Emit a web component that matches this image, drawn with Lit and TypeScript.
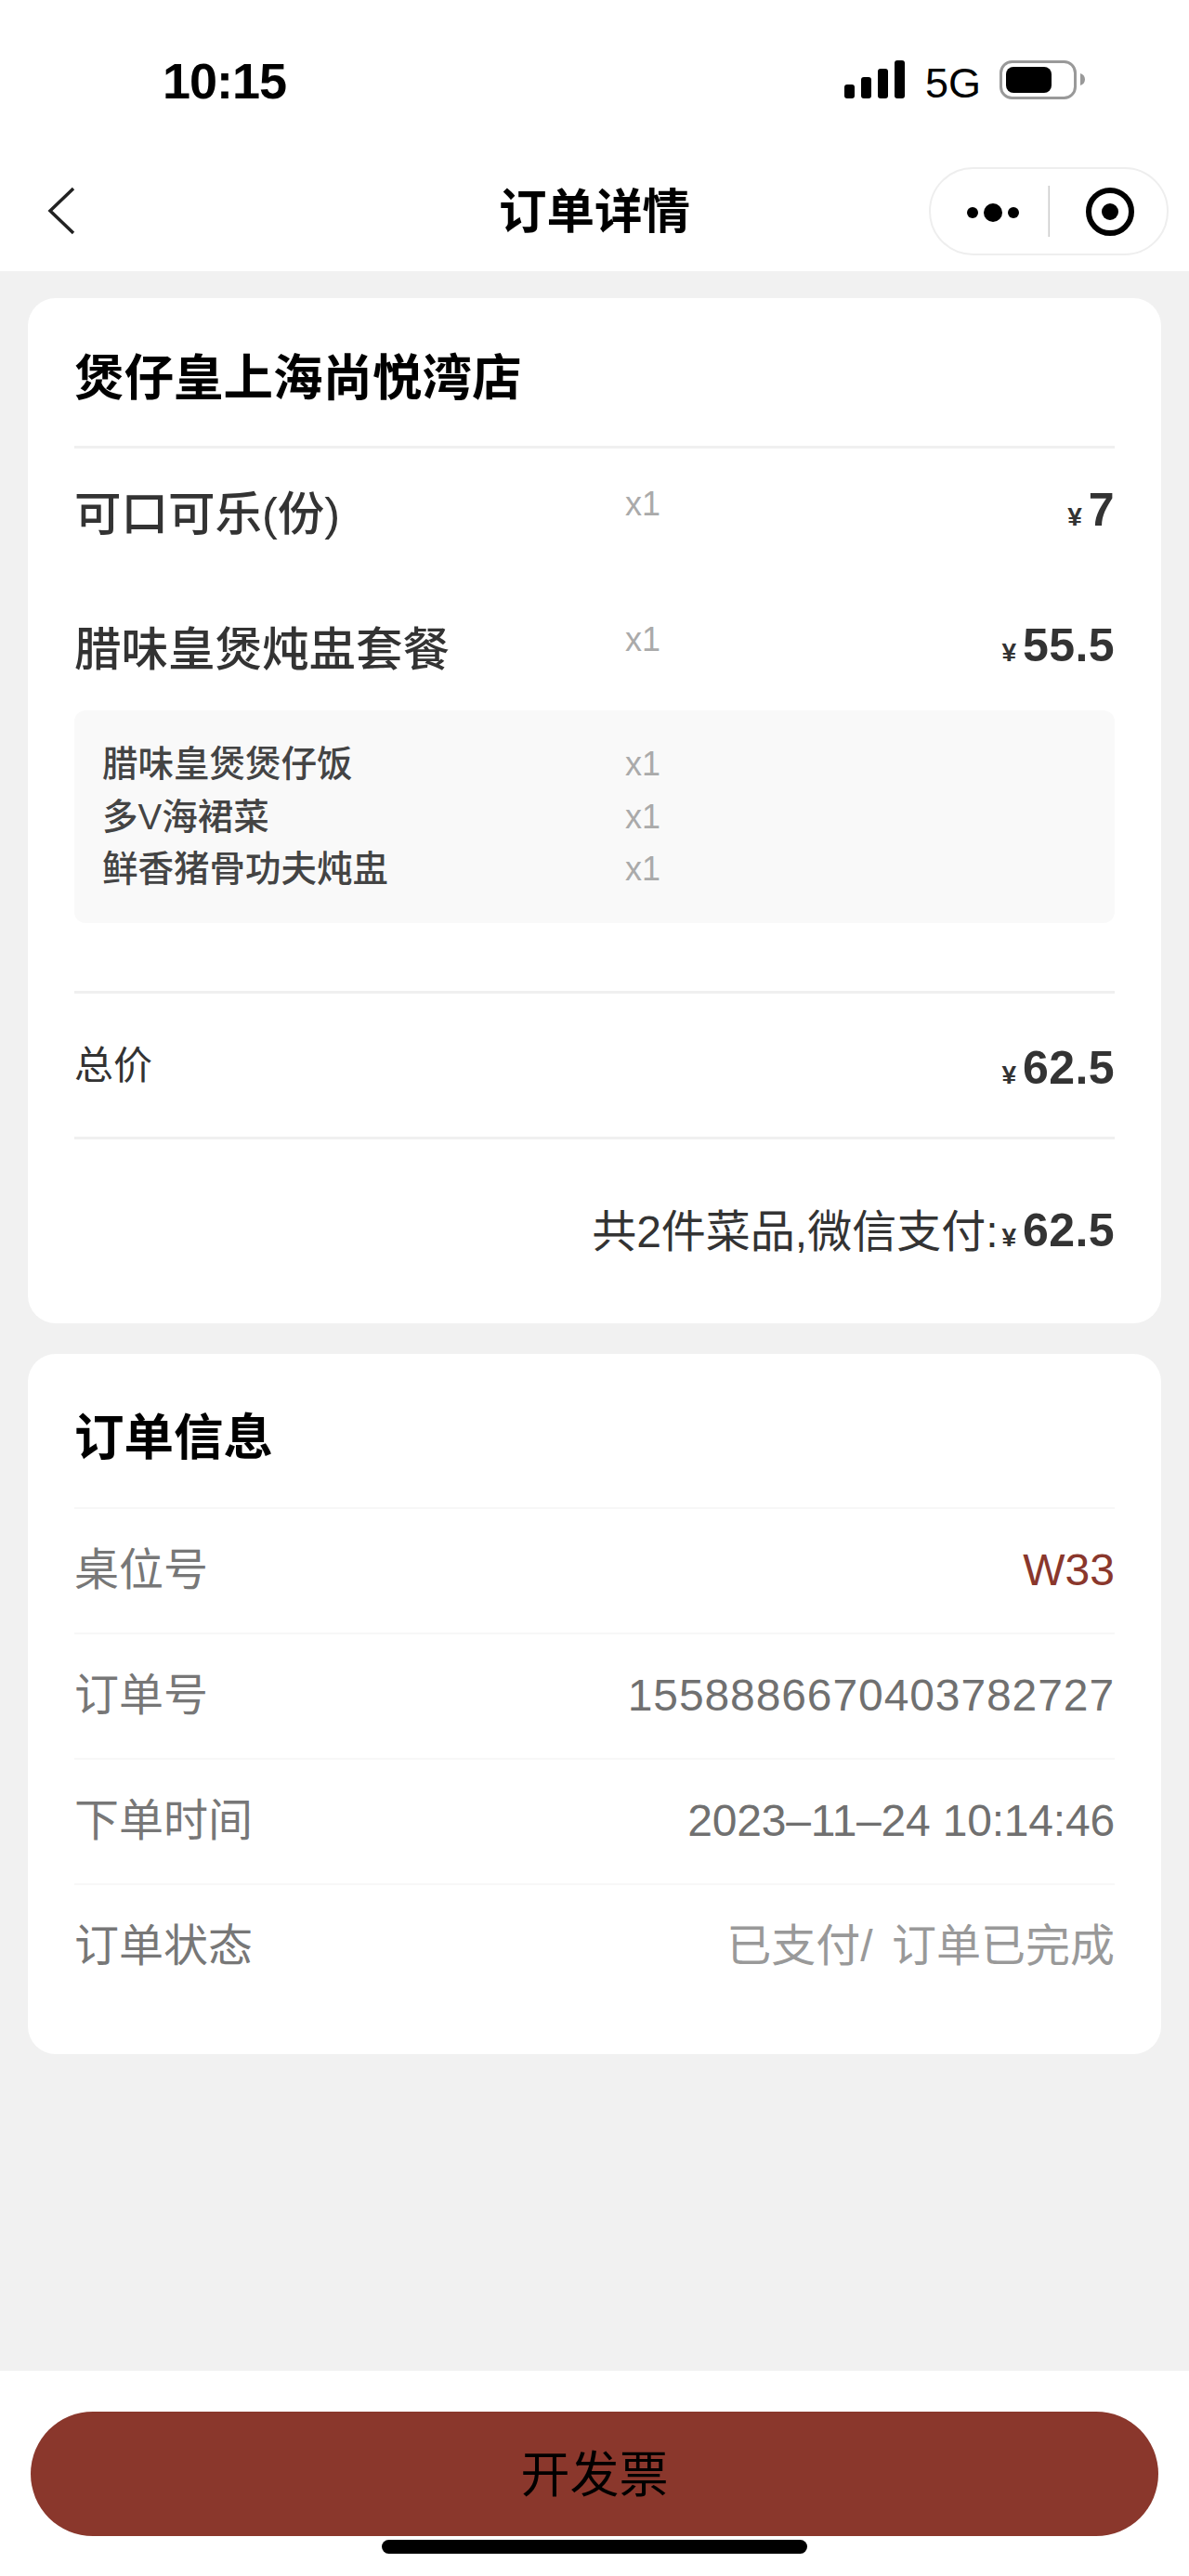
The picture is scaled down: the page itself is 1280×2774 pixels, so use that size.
import { LitElement, html, css } from 'lit';
import { customElement } from 'lit/decorators.js';

const subItems = ['腊味皇煲煲仔饭', '多V海裙菜', '鲜香猪骨功夫炖盅'];

@customElement('app-root')
export class AppRoot extends LitElement {
  static styles = css`
    :host {
      display: block;
      font-family: "Liberation Sans", "Noto Sans CJK SC", sans-serif;
      color: #333;
    }

    .page {
      height: 2774px;
      overflow: hidden;
      display: flex;
      flex-direction: column;
      background: #f1f1f1;
    }

    /* status bar and nav */
    .top {
      background: #fff;
      height: 292px;
      box-sizing: border-box;
    }

    .status {
      height: 178px;
      display: flex;
      align-items: flex-start;
      justify-content: space-between;
      padding: 56px 0 0 175px;
      box-sizing: border-box;
    }

    .time {
      font-size: 54px;
      line-height: 62px;
      font-weight: 700;
      color: #000;
      letter-spacing: -1px;
    }

    .status-icons {
      display: block;
    }

    .nav {
      height: 95px;
      display: grid;
      grid-template-columns: 1fr auto 1fr;
      align-items: center;
    }

    .back {
      display: block;
      margin-left: 50px;
    }

    .nav-title {
      font-size: 51.500px;
      line-height: 95px;
      padding-top: 3px;
      font-weight: 700;
      color: #000;
      text-align: center;
    }

    .capsule {
      justify-self: end;
      display: block;
      margin-right: 22px;
    }

    /* cards */
    main {
      flex: 1;
      padding: 29px 30px 0;
      display: flex;
      flex-direction: column;
      gap: 33px;
    }

    .card {
      background: #fff;
      border-radius: 30px;
      padding: 0 50px;
    }

    .card-title {
      font-size: 53.500px;
      line-height: 76px;
      font-weight: 700;
      color: #000;
    }

    .shop {
      padding: 49px 0 34px;
      border-bottom: 3px solid #f0f0f0;
    }

    .items {
      padding-top: 35px;
    }

    .item {
      display: grid;
      grid-template-columns: 593px 1fr auto;
      align-items: start;
      height: 146px;
    }

    .item.last {
      height: 101px;
    }

    .item-name {
      font-size: 50.500px;
      line-height: 72px;
      font-weight: 500;
      color: #333;
    }

    .qty {
      font-size: 36px;
      line-height: 50px;
      color: #aaa;
    }

    .price {
      display: flex;
      align-items: baseline;
      font-size: 50px;
      line-height: 62px;
      font-weight: 700;
      color: #333;
      letter-spacing: 0.4px;
    }

    .price .yen {
      font-size: 28px;
      margin-right: 7px;
      letter-spacing: 0;
    }

    .sub-box {
      background: #f9f9f9;
      border-radius: 12px;
      padding: 30px 30px 29px;
      margin-bottom: 73px;
    }

    .sub-row {
      display: grid;
      grid-template-columns: 563px 1fr;
      height: 56.500px;
      align-items: center;
    }

    .sub-name {
      font-size: 38.500px;
      line-height: 56px;
      font-weight: 500;
      color: #444;
    }

    .total {
      height: 154px;
      display: flex;
      justify-content: space-between;
      align-items: center;
      border-top: 3px solid #f0f0f0;
      border-bottom: 3px solid #f0f0f0;
    }

    .total-label {
      font-size: 42px;
      line-height: 60px;
      margin-top: 2px;
    }

    .total .price,
    .paid .price {
      margin-top: 14px;
    }

    .paid {
      height: 198px;
      display: flex;
      justify-content: flex-end;
      align-items: center;
      font-size: 48px;
      color: #333;
      padding-bottom: 8px;
      box-sizing: border-box;
    }

    .paid .price {
      margin-left: 4px;
    }

    .order-title {
      padding: 53px 0 36px;
    }

    .info-row {
      height: 135px;
      box-sizing: border-box;
      display: flex;
      justify-content: space-between;
      align-items: center;
      padding-bottom: 2px;
      border-top: 2px solid #f7f7f7;
      font-size: 48px;
      color: #777;
    }

    .info-label {
      margin-bottom: 9px;
    }

    .info-list {
      padding-bottom: 49px;
    }

    .info-value {
      letter-spacing: 0.9px;
      color: #707070;
    }

    .info-value.table {
      color: #8a372c;
      letter-spacing: 0;
    }

    .info-value.date {
      letter-spacing: -0.2px;
    }

    .info-value.status-text {
      color: #999;
      letter-spacing: 0;
      word-spacing: 7px;
      margin-bottom: 9px;
    }

    /* bottom button */
    footer {
      height: 221px;
      box-sizing: border-box;
      background: #fff;
      padding: 44px 33px 0;
      display: flex;
      flex-direction: column;
      align-items: center;
    }

    .invoice {
      width: 100%;
      height: 134px;
      border: 0;
      border-radius: 67px;
      background: #8a372c;
      color: #000;
      font-family: inherit;
      font-size: 53px;
      padding: 0 0 6px;
    }

    .home-bar {
      width: 458px;
      height: 15px;
      margin-top: 4px;
      background: #000;
      border-radius: 8px;
    }
  `;

  renderPrice(value: string) {
    return html`<div class="price"><span class="yen">¥</span><span>${value}</span></div>`;
  }

  render() {
    return html`
      <div class="page">
        <div class="top">
          <div class="status">
            <div class="time">10:15</div>
            <svg class="status-icons" width="371" height="60" viewBox="909 56 371 60">
              <rect x="909" y="91" width="11" height="15" rx="3" fill="#000"></rect>
              <rect x="927" y="83" width="11" height="23" rx="3" fill="#000"></rect>
              <rect x="945" y="74" width="11" height="32" rx="3" fill="#000"></rect>
              <rect x="963" y="65" width="11" height="41" rx="3" fill="#000"></rect>
              <text x="996" y="105" font-size="45" fill="#000" font-family="Liberation Sans">5G</text>
              <rect x="1077.500" y="66.500" width="80" height="39" rx="12" fill="none" stroke="#999" stroke-width="3"></rect>
              <rect x="1083" y="72" width="49" height="28" rx="8" fill="#000"></rect>
              <path d="M1163 79c3 1 5 3 5 6.500s-2 5.500-5 6.500z" fill="#999"></path>
            </svg>
          </div>
          <div class="nav">
            <svg class="back" width="34" height="54" viewBox="0 0 34 54">
              <path d="M29 3L4 27l25 24" fill="none" stroke="#222" stroke-width="3.500"></path>
            </svg>
            <div class="nav-title">订单详情</div>
            <svg class="capsule" width="258" height="95" viewBox="0 0 258 95">
              <rect x="1" y="1" width="256" height="93" rx="46.500" fill="#fff" stroke="#eee" stroke-width="2"></rect>
              <rect x="128.500" y="20" width="1.500" height="55" fill="#ccc"></rect>
              <circle cx="47" cy="49" r="6" fill="#000"></circle>
              <circle cx="69" cy="49" r="10" fill="#000"></circle>
              <circle cx="91" cy="49" r="6" fill="#000"></circle>
              <circle cx="195" cy="48" r="23" fill="none" stroke="#000" stroke-width="6"></circle>
              <circle cx="195" cy="48" r="9" fill="#000"></circle>
            </svg>
          </div>
        </div>

        <main>
          <section class="card">
            <div class="card-title shop">煲仔皇上海尚悦湾店</div>
            <div class="items">
              <div class="item">
                <div class="item-name">可口可乐(份)</div>
                <div class="qty">x1</div>
                ${this.renderPrice('7')}
              </div>
              <div class="item last">
                <div class="item-name">腊味皇煲炖盅套餐</div>
                <div class="qty">x1</div>
                ${this.renderPrice('55.5')}
              </div>
            </div>
            <div class="sub-box">
              ${subItems.map(
                (name) => html`
                  <div class="sub-row">
                    <div class="sub-name">${name}</div>
                    <div class="qty">x1</div>
                  </div>
                `
              )}
            </div>
            <div class="total">
              <div class="total-label">总价</div>
              ${this.renderPrice('62.5')}
            </div>
            <div class="paid">
              <span>共2件菜品,微信支付:</span>
              ${this.renderPrice('62.5')}
            </div>
          </section>

          <section class="card">
            <div class="card-title order-title">订单信息</div>
            <div class="info-list">
              <div class="info-row"><span class="info-label">桌位号</span><span class="info-value table">W33</span></div>
              <div class="info-row"><span class="info-label">订单号</span><span class="info-value">1558886670403782727</span></div>
              <div class="info-row"><span class="info-label">下单时间</span><span class="info-value date">2023–11–24 10:14:46</span></div>
              <div class="info-row"><span class="info-label">订单状态</span><span class="info-value status-text">已支付/ 订单已完成</span></div>
            </div>
          </section>
        </main>

        <footer>
          <button class="invoice">开发票</button>
          <div class="home-bar"></div>
        </footer>
      </div>
    `;
  }
}
